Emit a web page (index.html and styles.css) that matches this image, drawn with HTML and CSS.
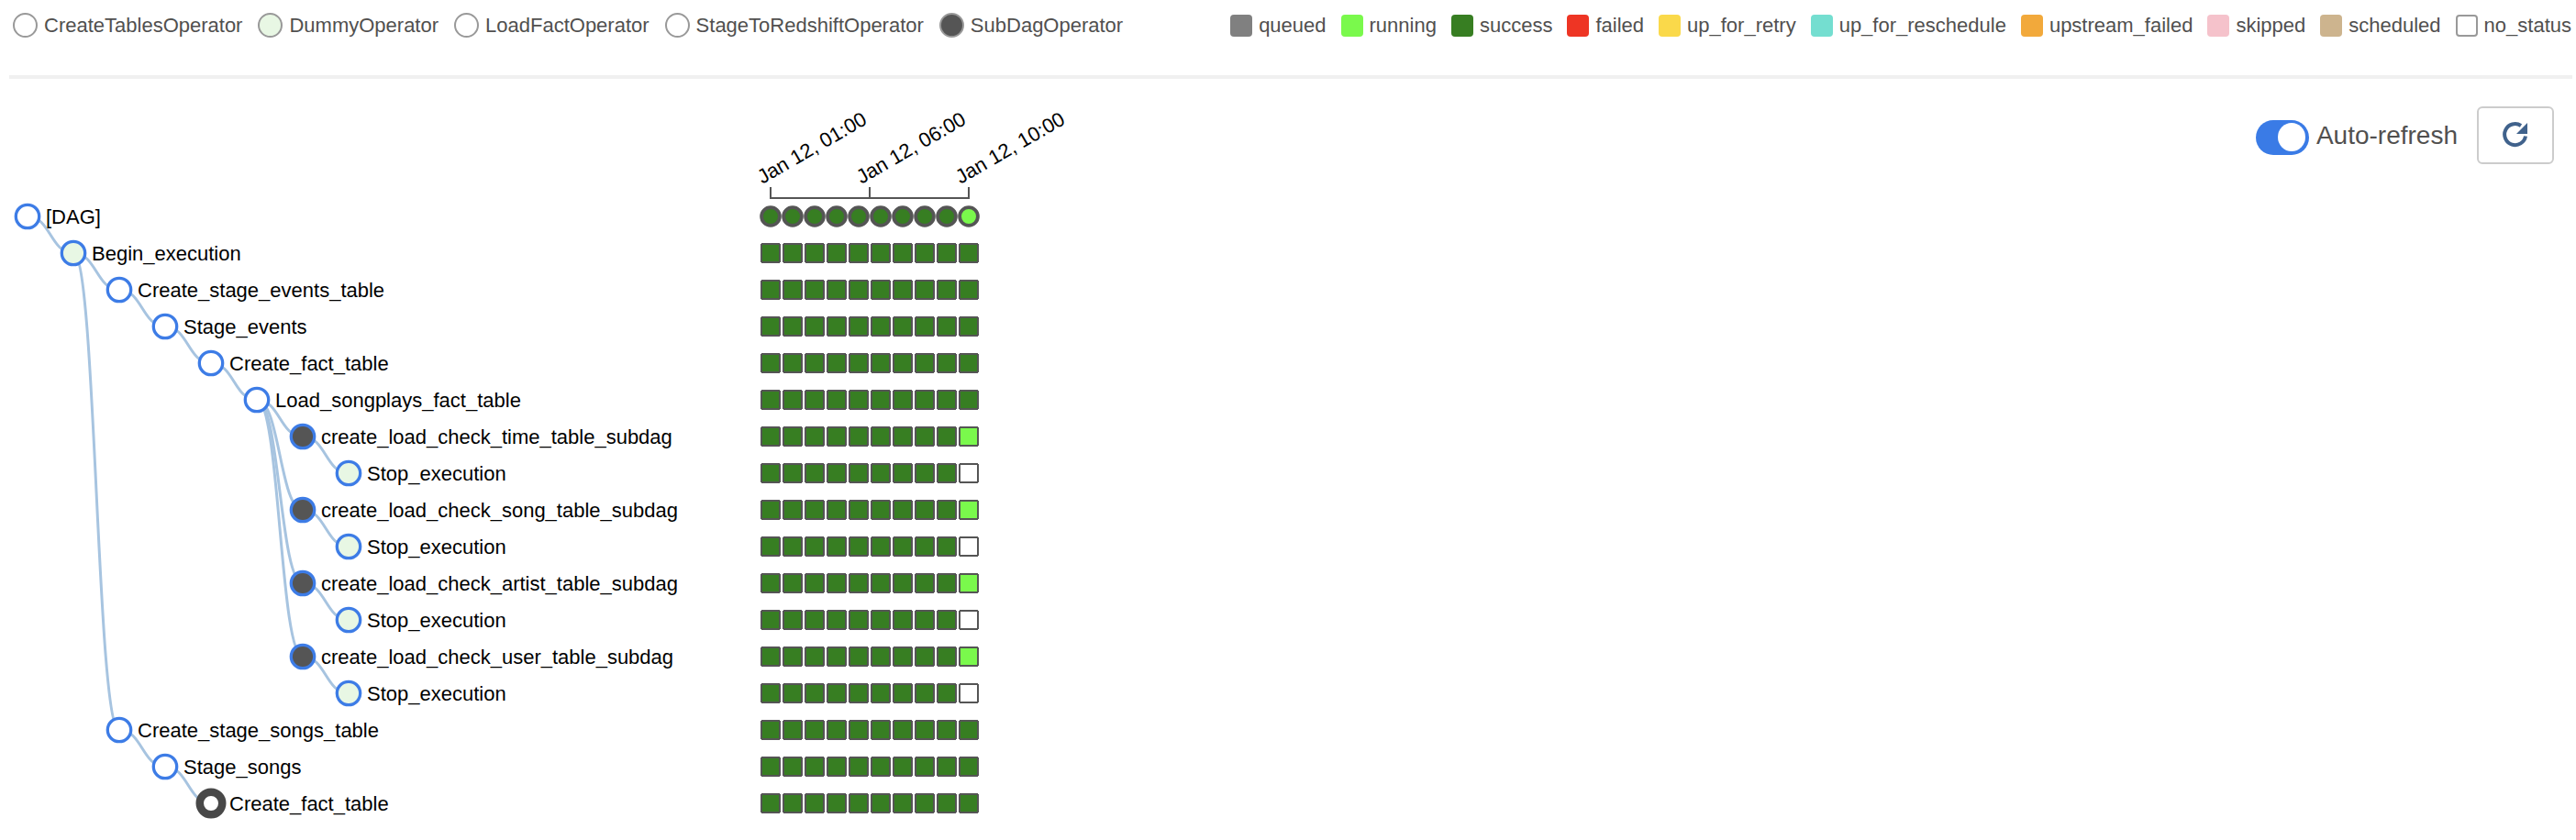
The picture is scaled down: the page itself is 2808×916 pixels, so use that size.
FILE: index.html
```html
<!DOCTYPE html>
<html lang="en">
<head>
    <meta charset="UTF-8">
    <title>Tree View</title>
    <link rel="stylesheet" href="styles.css">
</head>
<body>
    <div class="legend-row">
        <div class="legend ops">
            <div class="legend-item"><span class="op-dot"></span>CreateTablesOperator</div>
            <div class="legend-item"><span class="op-dot op-dummy"></span>DummyOperator</div>
            <div class="legend-item"><span class="op-dot"></span>LoadFactOperator</div>
            <div class="legend-item"><span class="op-dot"></span>StageToRedshiftOperator</div>
            <div class="legend-item"><span class="op-dot op-subdag"></span>SubDagOperator</div>
        </div>
        <div class="legend">
            <div class="legend-item"><span class="swatch queued"></span>queued</div>
            <div class="legend-item"><span class="swatch running"></span>running</div>
            <div class="legend-item"><span class="swatch success"></span>success</div>
            <div class="legend-item"><span class="swatch failed"></span>failed</div>
            <div class="legend-item"><span class="swatch retry"></span>up_for_retry</div>
            <div class="legend-item"><span class="swatch reschedule"></span>up_for_reschedule</div>
            <div class="legend-item"><span class="swatch upstream"></span>upstream_failed</div>
            <div class="legend-item"><span class="swatch skipped"></span>skipped</div>
            <div class="legend-item"><span class="swatch scheduled"></span>scheduled</div>
            <div class="legend-item"><span class="swatch no-status"></span>no_status</div>
        </div>
    </div>
    <hr class="divider">

    <div class="main">
        <svg class="tree" width="1240" height="830" viewBox="0 86 1240 830">
            <defs>
                <g id="nine-ok">
                    <rect class="cell ok" x="830" width="20" height="20" rx="2"/>
                    <rect class="cell ok" x="854" width="20" height="20" rx="2"/>
                    <rect class="cell ok" x="878" width="20" height="20" rx="2"/>
                    <rect class="cell ok" x="902" width="20" height="20" rx="2"/>
                    <rect class="cell ok" x="926" width="20" height="20" rx="2"/>
                    <rect class="cell ok" x="950" width="20" height="20" rx="2"/>
                    <rect class="cell ok" x="974" width="20" height="20" rx="2"/>
                    <rect class="cell ok" x="998" width="20" height="20" rx="2"/>
                    <rect class="cell ok" x="1022" width="20" height="20" rx="2"/>
                </g>
                <g id="row-ok">
                    <use href="#nine-ok"/>
                    <rect class="cell ok" x="1046" width="20" height="20" rx="2"/>
                </g>
                <g id="row-running">
                    <use href="#nine-ok"/>
                    <rect class="cell run" x="1046" width="20" height="20" rx="2"/>
                </g>
                <g id="row-none">
                    <use href="#nine-ok"/>
                    <rect class="cell none" x="1046" width="20" height="20" rx="2"/>
                </g>
            </defs>

            <!-- edges -->
            <path class="link" d="M30 236C55 236 55 276 80 276"/>
            <path class="link" d="M80 276C105 276 105 316 130 316"/>
            <path class="link" d="M80 276C105 276 105 796 130 796"/>
            <path class="link" d="M130 316C155 316 155 356 180 356"/>
            <path class="link" d="M180 356C205 356 205 396 230 396"/>
            <path class="link" d="M230 396C255 396 255 436 280 436"/>
            <path class="link" d="M280 436C305 436 305 476 330 476"/>
            <path class="link" d="M280 436C305 436 305 556 330 556"/>
            <path class="link" d="M280 436C305 436 305 636 330 636"/>
            <path class="link" d="M280 436C305 436 305 716 330 716"/>
            <path class="link" d="M330 476C355 476 355 516 380 516"/>
            <path class="link" d="M330 556C355 556 355 596 380 596"/>
            <path class="link" d="M330 636C355 636 355 676 380 676"/>
            <path class="link" d="M330 716C355 716 355 756 380 756"/>
            <path class="link" d="M130 796C155 796 155 836 180 836"/>
            <path class="link" d="M180 836C205 836 205 876 230 876"/>

            <!-- task nodes -->
            <circle class="node" cx="30" cy="236" r="12.7"/>
            <text class="label" x="50" y="236">[DAG]</text>
            <circle class="node dummy" cx="80" cy="276" r="12.7"/>
            <text class="label" x="100" y="276">Begin_execution</text>
            <circle class="node" cx="130" cy="316" r="12.7"/>
            <text class="label" x="150" y="316">Create_stage_events_table</text>
            <circle class="node" cx="180" cy="356" r="12.7"/>
            <text class="label" x="200" y="356">Stage_events</text>
            <circle class="node" cx="230" cy="396" r="12.7"/>
            <text class="label" x="250" y="396">Create_fact_table</text>
            <circle class="node" cx="280" cy="436" r="12.7"/>
            <text class="label" x="300" y="436">Load_songplays_fact_table</text>
            <circle class="node subdag" cx="330" cy="476" r="12.7"/>
            <text class="label" x="350" y="476">create_load_check_time_table_subdag</text>
            <circle class="node dummy" cx="380" cy="516" r="12.7"/>
            <text class="label" x="400" y="516">Stop_execution</text>
            <circle class="node subdag" cx="330" cy="556" r="12.7"/>
            <text class="label" x="350" y="556">create_load_check_song_table_subdag</text>
            <circle class="node dummy" cx="380" cy="596" r="12.7"/>
            <text class="label" x="400" y="596">Stop_execution</text>
            <circle class="node subdag" cx="330" cy="636" r="12.7"/>
            <text class="label" x="350" y="636">create_load_check_artist_table_subdag</text>
            <circle class="node dummy" cx="380" cy="676" r="12.7"/>
            <text class="label" x="400" y="676">Stop_execution</text>
            <circle class="node subdag" cx="330" cy="716" r="12.7"/>
            <text class="label" x="350" y="716">create_load_check_user_table_subdag</text>
            <circle class="node dummy" cx="380" cy="756" r="12.7"/>
            <text class="label" x="400" y="756">Stop_execution</text>
            <circle class="node" cx="130" cy="796" r="12.7"/>
            <text class="label" x="150" y="796">Create_stage_songs_table</text>
            <circle class="node" cx="180" cy="836" r="12.7"/>
            <text class="label" x="200" y="836">Stage_songs</text>
            <circle class="node selected" cx="230" cy="876" r="12.25"/>
            <text class="label" x="250" y="876">Create_fact_table</text>

            <!-- date axis -->
            <path class="axis" d="M840 204V216H1056V204M948 204V216"/>
            <text class="tick" transform="translate(831 201) rotate(-30)">Jan 12, 01:00</text>
            <text class="tick" transform="translate(939 201) rotate(-30)">Jan 12, 06:00</text>
            <text class="tick" transform="translate(1047 201) rotate(-30)">Jan 12, 10:00</text>

            <!-- dag runs -->
            <circle class="cell ok" cx="840" cy="236" r="9.9"/>
            <circle class="cell ok" cx="864" cy="236" r="9.9"/>
            <circle class="cell ok" cx="888" cy="236" r="9.9"/>
            <circle class="cell ok" cx="912" cy="236" r="9.9"/>
            <circle class="cell ok" cx="936" cy="236" r="9.9"/>
            <circle class="cell ok" cx="960" cy="236" r="9.9"/>
            <circle class="cell ok" cx="984" cy="236" r="9.9"/>
            <circle class="cell ok" cx="1008" cy="236" r="9.9"/>
            <circle class="cell ok" cx="1032" cy="236" r="9.9"/>
            <circle class="cell run" cx="1056" cy="236" r="9.9"/>

            <!-- task instances -->
            <use href="#row-ok" y="266"/>
            <use href="#row-ok" y="306"/>
            <use href="#row-ok" y="346"/>
            <use href="#row-ok" y="386"/>
            <use href="#row-ok" y="426"/>
            <use href="#row-running" y="466"/>
            <use href="#row-none" y="506"/>
            <use href="#row-running" y="546"/>
            <use href="#row-none" y="586"/>
            <use href="#row-running" y="626"/>
            <use href="#row-none" y="666"/>
            <use href="#row-running" y="706"/>
            <use href="#row-none" y="746"/>
            <use href="#row-ok" y="786"/>
            <use href="#row-ok" y="826"/>
            <use href="#row-ok" y="866"/>
        </svg>

        <div class="controls">
            <label class="switch-label"><span class="switch"><span class="knob"></span></span>Auto-refresh</label>
            <button class="refresh">
                <svg width="30" height="30" viewBox="0 0 30 30">
                    <path class="refresh-arc" d="M26 15.5A11.5 11.5 0 1 1 21 4"/>
                    <path class="refresh-head" d="M28 1V13H16Z"/>
                </svg>
            </button>
        </div>
    </div>
</body>
</html>
```

FILE: styles.css
```css
body {
    margin: 0;
    height: 916px;
    overflow: hidden;
    background: white;
    font-family: "Liberation Sans", Arial, sans-serif;
    color: #51504f;
}
.legend-row {
    display: flex;
    justify-content: space-between;
    height: 82px;
    padding: 14px 5px 0 14px;
    box-sizing: border-box;
}
.legend {
    display: flex;
    gap: 16px;
}
.ops {
    gap: 17px;
}
.legend-item {
    display: flex;
    align-items: center;
    gap: 7px;
    height: 27px;
    font-size: 22px;
}
.op-dot {
    width: 27px;
    height: 27px;
    box-sizing: border-box;
    border: 2px solid #999;
    border-radius: 50%;
    background: white;
}
.op-dummy {
    background: #e8f7e4;
}
.op-subdag {
    background: #555;
}
.swatch {
    width: 24px;
    height: 24px;
    box-sizing: border-box;
    border-radius: 4px;
}
.queued { background: #808080; }
.running { background: #7af94c; }
.success { background: #377e22; }
.failed { background: #ee3524; }
.retry { background: #fad94a; }
.reschedule { background: #74ded0; }
.upstream { background: #f2a93b; }
.skipped { background: #f5c2cb; }
.scheduled { background: #cdb48e; }
.no-status {
    background: white;
    border: 2px solid #999;
}
.divider {
    height: 4px;
    margin: 0 4px 0 10px;
    border: none;
    background: #f0f0f0;
}
.main {
    display: flex;
    justify-content: space-between;
    align-items: flex-start;
}
.tree {
    display: block;
}
.link {
    fill: none;
    stroke: #a7c4e0;
    stroke-width: 3;
}
.node {
    fill: white;
    stroke: #3d7ce6;
    stroke-width: 3.3;
}
.node.dummy {
    fill: #e8f7e4;
}
.node.subdag {
    fill: #555;
}
.node.selected {
    stroke: #484848;
    stroke-width: 8.5;
}
.label {
    font-size: 22px;
    fill: black;
    dominant-baseline: central;
}
.tick {
    font-size: 22px;
    fill: black;
}
.axis {
    fill: none;
    stroke: #555;
    stroke-width: 2;
}
.cell {
    stroke: #555;
    stroke-width: 2;
}
rect.cell {
    shape-rendering: crispEdges;
}
circle.cell {
    stroke-width: 3.8;
}
.ok { fill: #377e22; }
.run { fill: #7af94c; }
.none { fill: white; }
.controls {
    display: flex;
    align-items: center;
    gap: 21px;
    margin: 30px 24px 0 0;
}
.switch-label {
    display: flex;
    align-items: center;
    gap: 8px;
    font-size: 28px;
}
.switch {
    display: flex;
    justify-content: flex-end;
    align-items: center;
    width: 58px;
    height: 38px;
    margin-top: 4px;
    box-sizing: border-box;
    padding-right: 4px;
    border-radius: 19px;
    background: #3a7be6;
}
.knob {
    width: 30px;
    height: 31px;
    border-radius: 50%;
    background: white;
}
.refresh {
    display: flex;
    align-items: center;
    justify-content: center;
    width: 84px;
    height: 63px;
    padding: 0;
    border: 2px solid #ccc;
    border-radius: 6px;
    background: white;
}
.refresh-arc {
    fill: none;
    stroke: #40628c;
    stroke-width: 4;
}
.refresh-head {
    fill: #40628c;
}
```
